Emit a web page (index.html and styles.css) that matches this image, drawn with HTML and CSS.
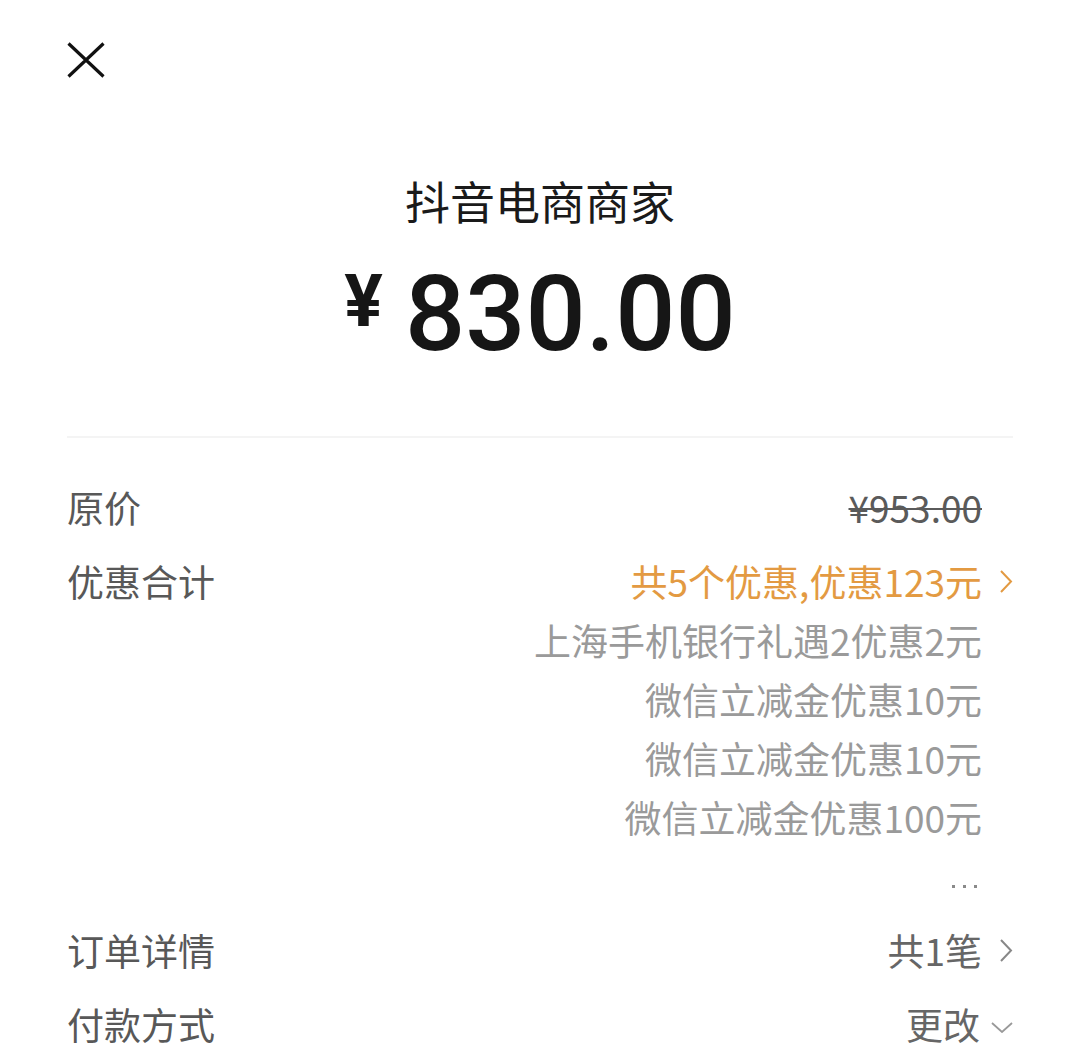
FILE: index.html
```html
<!DOCTYPE html>
<html lang="zh-CN">
<head>
<meta charset="utf-8">
<title>支付</title>
<link rel="stylesheet" href="styles.css">
</head>
<body>
<div class="page">
  <header class="top">
    <svg class="close" width="38" height="36" viewBox="0 0 38 36"><path d="M1.5 1.5 L36.5 34.5 M36.5 1.5 L1.5 34.5" stroke="#111" stroke-width="3.2" fill="none"/></svg>
  </header>
  <div class="merchant">抖音电商商家</div>
  <div class="amount"><span class="cur">¥</span><span class="num">830.00</span></div>
  <div class="divider"></div>
  <div class="rows">
    <div class="row">
      <div class="label">原价</div>
      <div class="vals">
        <div class="line"><span class="strike">¥953.00</span><span class="slot"></span></div>
      </div>
    </div>
    <div class="row">
      <div class="label">优惠合计</div>
      <div class="vals">
        <div class="line orange"><span>共5个优惠,优惠123元</span><span class="slot"><svg width="14" height="25" viewBox="0 0 14 25"><path d="M2 2 L12 12.5 L2 23" stroke="#e39a42" stroke-width="2" fill="none"/></svg></span></div>
        <div class="line sub"><span>上海手机银行礼遇2优惠2元</span><span class="slot"></span></div>
        <div class="line sub"><span>微信立减金优惠10元</span><span class="slot"></span></div>
        <div class="line sub"><span>微信立减金优惠10元</span><span class="slot"></span></div>
        <div class="line sub"><span>微信立减金优惠100元</span><span class="slot"></span></div>
        <div class="line sub"><span class="dots"><i></i><i></i><i></i></span><span class="slot"></span></div>
      </div>
    </div>
    <div class="row">
      <div class="label">订单详情</div>
      <div class="vals">
        <div class="line plain"><span>共1笔</span><span class="slot"><svg width="14" height="25" viewBox="0 0 14 25"><path d="M2 2 L12 12.5 L2 23" stroke="#888" stroke-width="2" fill="none"/></svg></span></div>
      </div>
    </div>
    <div class="row">
      <div class="label">付款方式</div>
      <div class="vals">
        <div class="line plain"><span>更改</span><span class="slot down"><svg width="22" height="11" viewBox="0 0 22 11"><path d="M1 1 L11 10 L21 1" stroke="#999" stroke-width="1.8" fill="none"/></svg></span></div>
      </div>
    </div>
  </div>
</div>
</body>
</html>
```

FILE: styles.css
```css
html, body {
  margin: 0;
  padding: 0;
  background: #ffffff;
}

body {
  font-family: "Noto Sans CJK SC", "Noto Sans", sans-serif;
  color: #1a1a1a;
}

.page {
  padding: 42px 67px 0 67px;
  overflow: hidden;
  height: 1004px;
}

.top {
  height: 36px;
}

.close {
  display: block;
}

.merchant {
  margin-top: 93px;
  text-align: center;
  font-size: 45px;
  line-height: 60px;
  color: #1a1a1a;
}

.amount {
  margin-top: 30px;
  display: flex;
  justify-content: center;
  align-items: flex-start;
  gap: 22px;
  font-family: Roboto, "Liberation Sans", sans-serif;
  color: #161616;
}

.cur {
  font-size: 72px;
  line-height: 72px;
  font-weight: 700;
  margin-top: 5px;
}

.num {
  font-size: 106px;
  line-height: 106px;
  font-weight: 500;
}

.divider {
  margin-top: 69px;
  height: 2px;
  background: #f4f4f4;
}

.rows {
  margin-top: 40px;
  display: flex;
  flex-direction: column;
  gap: 15px;
}

.row {
  display: flex;
  justify-content: space-between;
  align-items: flex-start;
  font-size: 37px;
  line-height: 59px;
}

.label {
  color: #585858;
}

.vals {
  display: flex;
  flex-direction: column;
  align-items: flex-end;
}

.line {
  display: flex;
  align-items: center;
  height: 59px;
}

.slot {
  width: 31px;
  display: flex;
  justify-content: flex-end;
  align-items: center;
}

.slot.down {
  width: 33px;
  padding-top: 6px;
}

.strike {
  color: #5a5a5a;
  text-decoration: line-through;
  text-decoration-thickness: 2px;
}

.orange {
  color: #e39a42;
}

.sub {
  color: #9a9a9a;
}

.plain {
  color: #666666;
}

.dots {
  display: flex;
  gap: 8px;
  padding-top: 20px;
  margin-right: 5px;
}

.dots i {
  display: block;
  width: 3px;
  height: 3px;
  background: #8a8a8a;
}
```
